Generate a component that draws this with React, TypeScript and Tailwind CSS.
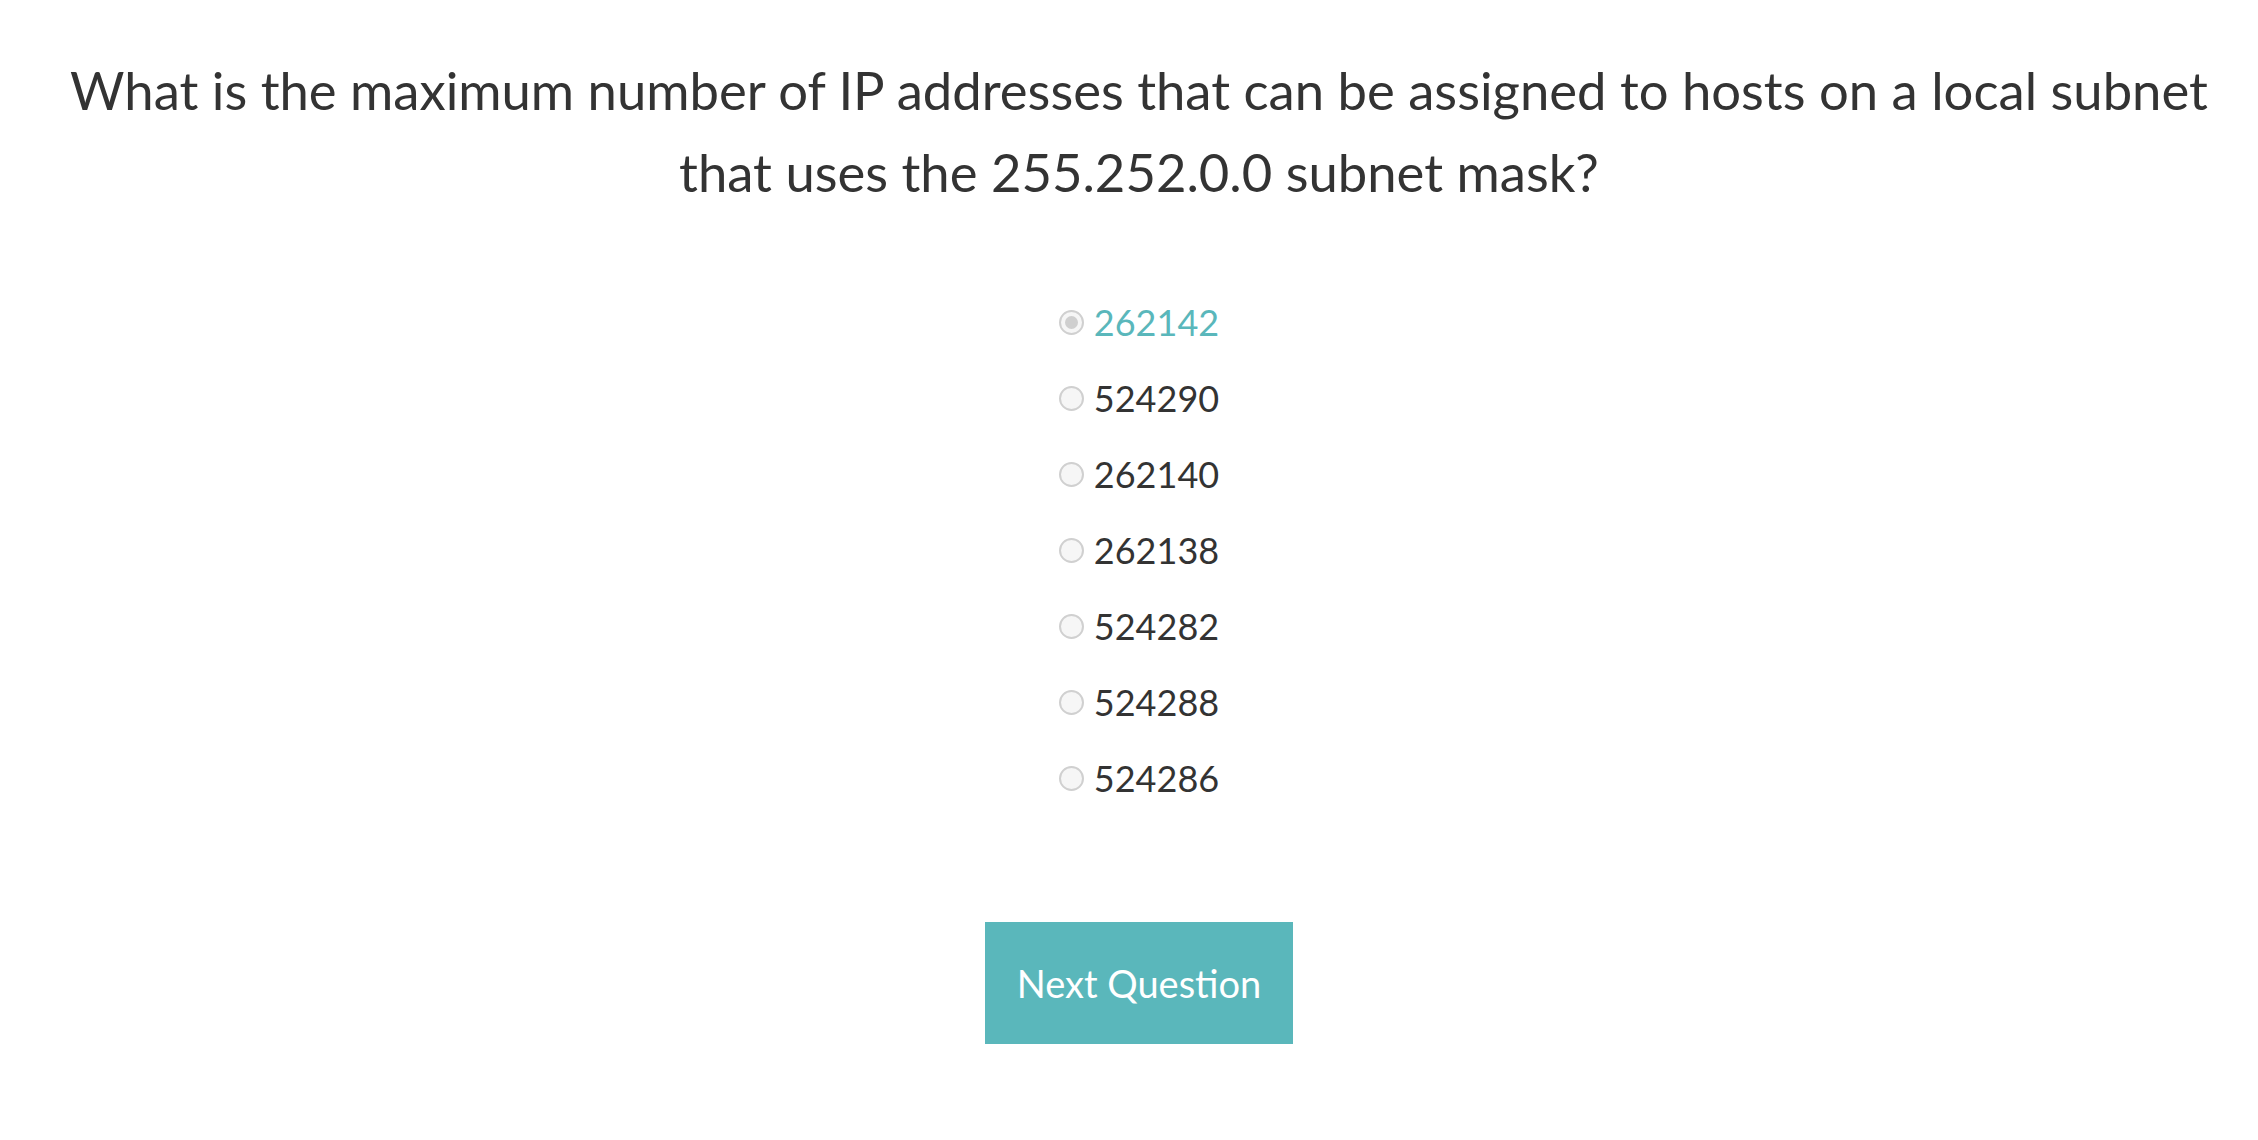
import { useState } from "react";

const options = ["262142", "524290", "262140", "262138", "524282", "524288", "524286"];

export default function App() {
  const [selected, setSelected] = useState("262142");

  return (
    <div className="min-h-screen w-full bg-white pl-[56px] pr-[36px] pt-[49px] font-['Lato',sans-serif] text-[#333333]">
      <h1 className="text-center text-[52.6px] leading-[82px] font-normal">
        What is the maximum number of IP addresses that can be assigned to hosts on a local subnet that uses the 255.252.0.0 subnet mask?
      </h1>

      <div className="mt-[71px] flex justify-center">
        <div className="flex flex-col">
          {options.map((opt) => {
            const active = opt === selected;
            return (
              <label
                key={opt}
                onClick={() => setSelected(opt)}
                className="flex h-[76px] cursor-pointer items-center gap-[10px]"
              >
                <span className="flex h-[25px] w-[25px] items-center justify-center rounded-full border-2 border-[#d0d0d0] bg-[#f6f6f6]">
                  {active && <span className="h-[13px] w-[13px] rounded-full bg-[#cfcfcf]" />}
                </span>
                <span className={`text-[36px] leading-none ${active ? "text-[#5ab7bb]" : "text-[#333333]"}`}>
                  {opt}
                </span>
              </label>
            );
          })}
        </div>
      </div>

      <div className="mt-[106px] flex justify-center">
        <button className="h-[122px] w-[308px] bg-[#5ab7bb] text-[38px] text-white">
          Next Question
        </button>
      </div>
    </div>
  );
}
